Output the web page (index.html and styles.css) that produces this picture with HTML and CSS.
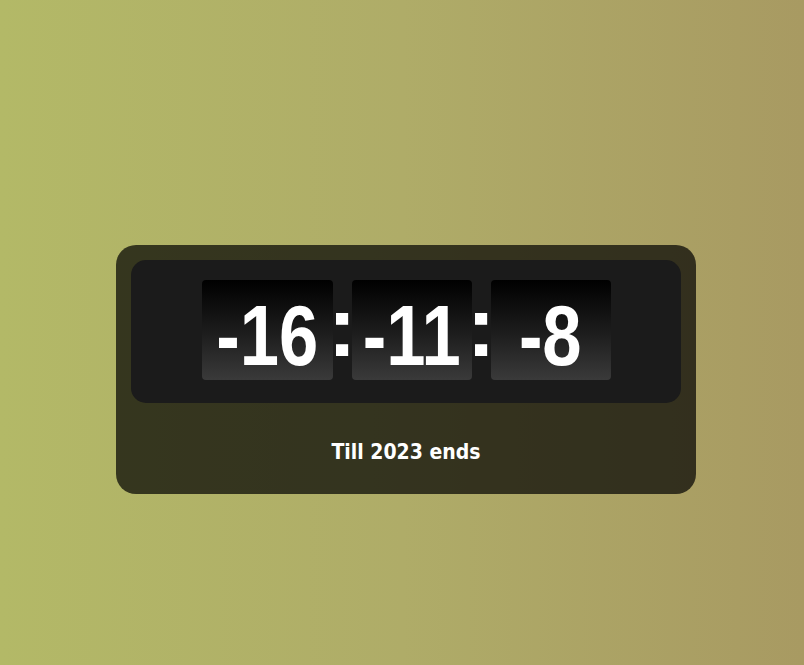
FILE: index.html
```html
<!DOCTYPE html>
<html lang="en">
<head>
<meta charset="utf-8">
<title>Countdown</title>
<link rel="stylesheet" href="styles.css">
</head>
<body>
<div class="page">
  <div class="card">
    <div class="panel">
      <div class="digit digit-wide"><span class="num">-16</span></div>
      <div class="colon">:</div>
      <div class="digit"><span class="num">-11</span></div>
      <div class="colon">:</div>
      <div class="digit"><span class="num">-8</span></div>
    </div>
    <div class="caption">Till 2023 ends</div>
  </div>
</div>
</body>
</html>
```

FILE: styles.css
```css
html, body {
  margin: 0;
  padding: 0;
  height: 100%;
}
body {
  background: linear-gradient(90deg, #b3b967 0%, #afac68 50%, #a89a62 100%);
  font-family: "DejaVu Sans Condensed", "DejaVu Sans", sans-serif;
}
.page {
  padding: 245px 0 0 116px;
}
.card {
  width: 550px;
  height: 219px;
  padding: 15px;
  border-radius: 20px;
  background: rgba(0, 0, 0, 0.7);
  display: flex;
  flex-direction: column;
}
.panel {
  height: 143px;
  box-sizing: border-box;
  padding: 20px 0;
  border-radius: 15px;
  background: #1b1b1b;
  display: flex;
  justify-content: center;
  align-items: stretch;
}
.digit {
  width: 120px;
  height: 100px;
  border-radius: 4px;
  background: linear-gradient(180deg, #000000 0%, #1e1e1e 55%, #3a3a3a 100%);
  color: #fff;
  font-family: "Liberation Sans", Arial, sans-serif;
  font-weight: bold;
  font-size: 86px;
  line-height: 110px;
  display: flex;
  justify-content: center;
  white-space: nowrap;
}
.digit-wide {
  width: 131px;
}
.num {
  display: inline-block;
  transform: scaleX(0.82);
  margin: 0 -11px;
}
.colon {
  width: 19px;
  display: flex;
  justify-content: center;
  color: #fff;
  font-family: "Liberation Sans", Arial, sans-serif;
  font-weight: bold;
  font-size: 86px;
  line-height: 92px;
}
.caption {
  margin-top: 36px;
  text-align: center;
  color: #fff;
  font-weight: bold;
  font-size: 21px;
  line-height: 26px;
}
```
